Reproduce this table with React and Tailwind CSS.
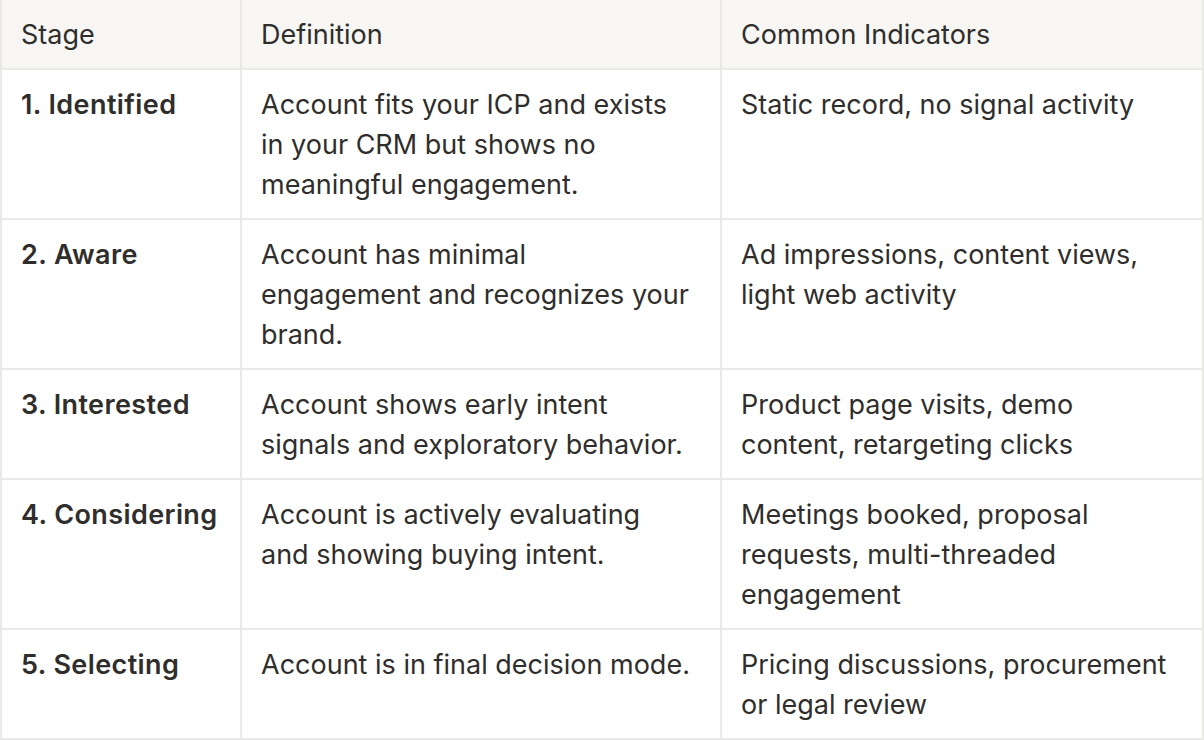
import React from "react";

const rows = [
  {
    stage: "1. Identified",
    def: ["Account fits your ICP and exists", "in your CRM but shows no", "meaningful engagement."],
    ind: ["Static record, no signal activity"],
  },
  {
    stage: "2. Aware",
    def: ["Account has minimal", "engagement and recognizes your", "brand."],
    ind: ["Ad impressions, content views,", "light web activity"],
  },
  {
    stage: "3. Interested",
    def: ["Account shows early intent", "signals and exploratory behavior."],
    ind: ["Product page visits, demo", "content, retargeting clicks"],
  },
  {
    stage: "4. Considering",
    def: ["Account is actively evaluating", "and showing buying intent."],
    ind: ["Meetings booked, proposal", "requests, multi-threaded", "engagement"],
  },
  {
    stage: "5. Selecting",
    def: ["Account is in final decision mode."],
    ind: ["Pricing discussions, procurement", "or legal review"],
  },
];

function Lines({ lines }) {
  return lines.map((l, i) => (
    <div key={i} className="whitespace-nowrap">
      {l}
    </div>
  ));
}

export default function App() {
  return (
    <div
      className="w-[1204px] h-[740px] bg-white overflow-hidden text-[#2f2e2c]"
      style={{ fontFamily: "Inter, 'Noto Sans', sans-serif" }}
    >
      <table className="table-fixed border-collapse w-[1202px] text-[27px] leading-[40px] -mt-[2px]">
        <colgroup>
          <col className="w-[240px]" />
          <col className="w-[480px]" />
          <col className="w-[482px]" />
        </colgroup>
        <thead>
          <tr className="bg-[#f7f6f3]">
            {["Stage", "Definition", "Common Indicators"].map((h) => (
              <th
                key={h}
                className="border-2 border-[#e9e9e7] text-left font-normal align-top px-[19px] pt-[15px] pb-[13px]"
              >
                {h}
              </th>
            ))}
          </tr>
        </thead>
        <tbody>
          {rows.map((r) => (
            <tr key={r.stage}>
              <td className="border-2 border-[#e9e9e7] align-top px-[19px] pt-[15px] pb-[13px] font-semibold tracking-[0.4px] whitespace-nowrap">
                {r.stage}
              </td>
              <td className="border-2 border-[#e9e9e7] align-top px-[19px] pt-[15px] pb-[13px]">
                <Lines lines={r.def} />
              </td>
              <td className="border-2 border-[#e9e9e7] align-top px-[19px] pt-[15px] pb-[13px]">
                <Lines lines={r.ind} />
              </td>
            </tr>
          ))}
        </tbody>
      </table>
    </div>
  );
}
